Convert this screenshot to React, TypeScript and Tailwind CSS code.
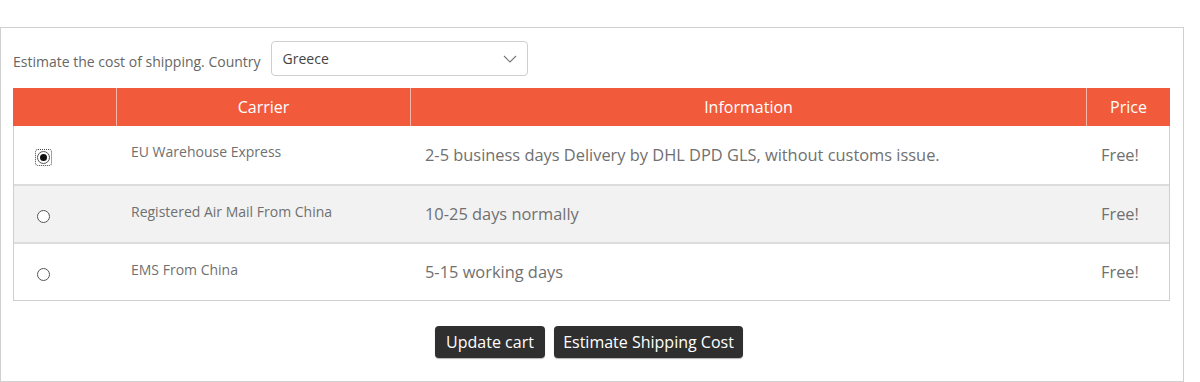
import React from "react";

const rows = [
  { name: "EU Warehouse Express", info: "2-5 business days Delivery by DHL DPD GLS, without customs issue.", price: "Free!", selected: true, bg: "bg-white" },
  { name: "Registered Air Mail From China", info: "10-25 days normally", price: "Free!", selected: false, bg: "bg-[#f2f2f2]" },
  { name: "EMS From China", info: "5-15 working days", price: "Free!", selected: false, bg: "bg-white" },
];

function Radio({ selected }: { selected: boolean }) {
  if (selected) {
    return (
      <div className="w-[17px] h-[17px] border border-dotted border-[#444] rounded-[3px] flex items-center justify-center">
        <div className="w-[13px] h-[13px] rounded-full border border-[#555] bg-white flex items-center justify-center">
          <div className="w-[7px] h-[7px] rounded-full bg-[#111]" />
        </div>
      </div>
    );
  }
  return <div className="w-[13px] h-[13px] rounded-full border border-[#555] bg-white ml-[2px]" />;
}

export default function App() {
  return (
    <div className="w-[1200px] h-[382px] bg-white pt-[27px]" style={{ fontFamily: '"Open Sans", "Noto Sans", sans-serif' }}>
      <div className="w-[1184px] h-[355px] border border-[#d0d0d0] px-[12px] pt-[13px]">
        <div className="flex items-center h-[35px]">
          <span className="text-[14px] text-[#666] mt-[6px]">Estimate the cost of shipping. Country</span>
          <div className="ml-[10px] w-[257px] h-[35px] border border-[#cfcfcf] rounded-[4px] flex items-center justify-between pl-[11px] pr-[10px]">
            <span className="text-[14px] text-[#444]">Greece</span>
            <svg width="14" height="8" viewBox="0 0 14 8" fill="none">
              <path d="M1 1l6 6 6-6" stroke="#777" strokeWidth="1.1" />
            </svg>
          </div>
        </div>
        <div className="mt-[12px] w-[1157px]">
          <div className="grid grid-cols-[104px_294px_676px_83px] h-[38px] bg-[#f15b3b] text-white text-[16px]">
            <div className="border-r border-[#f7b7a6]" />
            <div className="border-r border-[#f7b7a6] flex items-center justify-center">Carrier</div>
            <div className="border-r border-[#f7b7a6] flex items-center justify-center">Information</div>
            <div className="flex items-center justify-center">Price</div>
          </div>
          <div className="border-x border-b border-[#cfcfcf]">
            {rows.map((r, i) => (
              <div
                key={i}
                className={`grid grid-cols-[103px_294px_676px_82px] h-[58px] ${r.bg} ${i > 0 ? "border-t-2 border-[#dcdcdc]" : ""}`}
              >
                <div className="flex items-center justify-start pt-[4px] pl-[21px]">
                  <Radio selected={r.selected} />
                </div>
                <div className="pl-[14px] pt-[16px] text-[14px] leading-[20px] text-[#707070]">{r.name}</div>
                <div className="pl-[14px] flex items-center text-[16.4px] text-[#707070]">{r.info}</div>
                <div className="pl-[14px] flex items-center text-[16.4px] text-[#707070]">{r.price}</div>
              </div>
            ))}
          </div>
        </div>
        <div className="flex justify-center gap-[9px] mt-[25px] pr-[6px]">
          <button className="h-[32px] w-[110px] rounded-[4px] bg-[#2f2f2f] text-white text-[16px] shadow-[0_1px_1px_rgba(0,0,0,0.3)]">Update cart</button>
          <button className="h-[32px] w-[189px] rounded-[4px] bg-[#2f2f2f] text-white text-[16px] shadow-[0_1px_1px_rgba(0,0,0,0.3)]">Estimate Shipping Cost</button>
        </div>
      </div>
    </div>
  );
}
